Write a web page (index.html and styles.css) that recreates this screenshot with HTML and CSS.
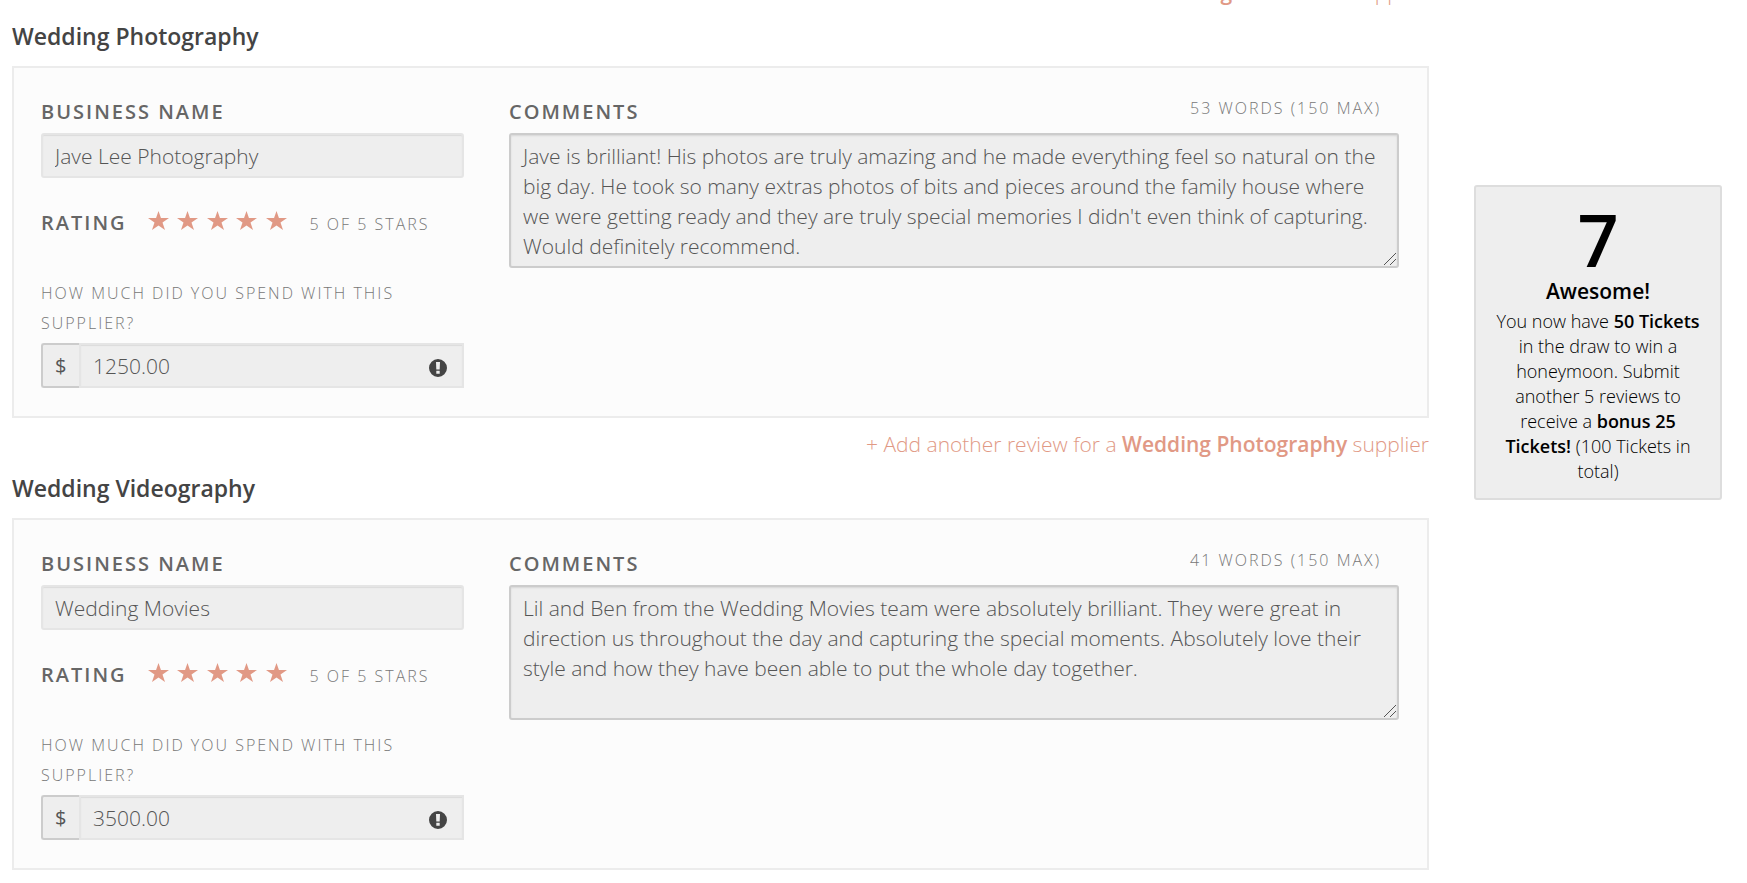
FILE: index.html
```html
<!DOCTYPE html>
<html lang="en">
<head>
  <title>Supplier Reviews</title>
  <meta charset="UTF-8">
  <meta name="viewport" content="width=device-width, initial-scale=1">
  <link rel="stylesheet" href="styles.css">
</head>
<body>
  <svg width="0" height="0" class="sprite" aria-hidden="true">
    <symbol id="star" viewBox="0 0 21 19">
      <path d="M10.500 0L12.950 7H21L14.500 11.600L17 19L10.500 14.500L4 19L6.500 11.600L0 7H8.050Z"/>
    </symbol>
    <symbol id="alert" viewBox="0 0 18 18">
      <path fill-rule="evenodd" d="M9 0a9 9 0 1 1 0 18A9 9 0 0 1 9 0zM7 3l.3 7.500h3.400L11 3zM7.300 11.800v2.900h3.400v-2.900z"/>
    </symbol>
  </svg>

  <div class="page">
    <main class="reviews">
      <div class="add-row">
        <a href="#celebrants" class="add-link">+ Add another review for a <strong>Wedding Celebrants</strong> supplier</a>
      </div>

      <h2>Wedding Photography</h2>
      <section class="card">
        <div class="details">
          <label class="label" for="photo-name">Business Name</label>
          <input type="text" id="photo-name" class="field" value="Jave Lee Photography">

          <div class="rating">
            <span class="label">Rating</span>
            <div class="stars">
              <button type="button" aria-label="1 star"><svg><use href="#star"/></svg></button>
              <button type="button" aria-label="2 stars"><svg><use href="#star"/></svg></button>
              <button type="button" aria-label="3 stars"><svg><use href="#star"/></svg></button>
              <button type="button" aria-label="4 stars"><svg><use href="#star"/></svg></button>
              <button type="button" aria-label="5 stars"><svg><use href="#star"/></svg></button>
            </div>
            <span class="small">5 of 5 stars</span>
          </div>

          <label class="small spend-label" for="photo-spend">How much did you spend with this supplier?</label>
          <div class="spend">
            <span class="addon">$</span>
            <input type="text" id="photo-spend" class="field" value="1250.00">
            <svg class="alert"><use href="#alert"/></svg>
          </div>
        </div>

        <div class="comments">
          <div class="comments-head">
            <label class="label" for="photo-comments">Comments</label>
            <span class="small">53 words (150 max)</span>
          </div>
          <textarea id="photo-comments" rows="4" spellcheck="false">Jave is brilliant! His photos are truly amazing and he made everything feel so natural on the big day. He took so many extras photos of bits and pieces around the family house where we were getting ready and they are truly special memories I didn't even think of capturing. Would definitely recommend.</textarea>
        </div>
      </section>
      <div class="add-row">
        <a href="#photography" class="add-link">+ Add another review for a <strong>Wedding Photography</strong> supplier</a>
      </div>

      <h2>Wedding Videography</h2>
      <section class="card">
        <div class="details">
          <label class="label" for="video-name">Business Name</label>
          <input type="text" id="video-name" class="field" value="Wedding Movies">

          <div class="rating">
            <span class="label">Rating</span>
            <div class="stars">
              <button type="button" aria-label="1 star"><svg><use href="#star"/></svg></button>
              <button type="button" aria-label="2 stars"><svg><use href="#star"/></svg></button>
              <button type="button" aria-label="3 stars"><svg><use href="#star"/></svg></button>
              <button type="button" aria-label="4 stars"><svg><use href="#star"/></svg></button>
              <button type="button" aria-label="5 stars"><svg><use href="#star"/></svg></button>
            </div>
            <span class="small">5 of 5 stars</span>
          </div>

          <label class="small spend-label" for="video-spend">How much did you spend with this supplier?</label>
          <div class="spend">
            <span class="addon">$</span>
            <input type="text" id="video-spend" class="field" value="3500.00">
            <svg class="alert"><use href="#alert"/></svg>
          </div>
        </div>

        <div class="comments">
          <div class="comments-head">
            <label class="label" for="video-comments">Comments</label>
            <span class="small">41 words (150 max)</span>
          </div>
          <textarea id="video-comments" rows="4" spellcheck="false">Lil and Ben from the Wedding Movies team were absolutely brilliant. They were great in direction us throughout the day and capturing the special moments. Absolutely love their style and how they have been able to put the whole day together.</textarea>
        </div>
      </section>
    </main>

    <aside class="tickets">
      <div class="count">7</div>
      <h3>Awesome!</h3>
      <p>You now have <strong>50 Tickets</strong> in the draw to win a honeymoon. Submit another 5 reviews to receive a <strong>bonus 25 Tickets!</strong> (100 Tickets in total)</p>
    </aside>
  </div>
</body>
</html>
```
FILE: styles.css
```css
* {
  box-sizing: border-box;
}
body {
  margin: 0;
  font-family: "Open Sans", sans-serif;
  font-size: 21px;
  font-weight: 300;
  line-height: 30px;
  color: #444;
  background: #fff;
}
.sprite {
  position: absolute;
}
.page {
  display: flex;
  align-items: flex-start;
  gap: 45px;
  padding: 0 25px 0 12px;
}
/* the list is scrolled part way past its first link */
.reviews {
  flex: 1;
  min-width: 0;
  margin-top: -23px;
}
h2 {
  margin: 14px 0 15px;
  font-size: 23px;
  font-weight: 600;
  line-height: 30px;
}
strong {
  font-weight: 600;
}
.add-row {
  text-align: right;
}
.card + .add-row {
  margin-top: 11px;
}
.add-link {
  color: #e19985;
  text-decoration: none;
}
.card {
  display: grid;
  grid-template-columns: minmax(0, 423fr) minmax(0, 890fr);
  gap: 45px;
  padding: 28px 28px 28px 27px;
  background: #fcfcfc;
  border: 2px solid #ececec;
}
.label {
  display: block;
  font-size: 20px;
  font-weight: 600;
  line-height: 32px;
  letter-spacing: 2px;
  text-transform: uppercase;
  color: #666;
}
.small {
  font-size: 16px;
  letter-spacing: 2px;
  text-transform: uppercase;
  color: #777;
}
.field {
  display: block;
  width: 100%;
  height: 45px;
  margin: 0;
  padding: 0 12px;
  font: inherit;
  color: #555;
  background: #eee;
  border: 2px solid #e5e5e5;
  border-radius: 3px;
  box-shadow: inset 0 1px 1px rgba(0, 0, 0, 0.08);
}
.label + .field {
  margin-top: 5px;
}
.rating {
  display: flex;
  align-items: baseline;
  margin: 29px 0 39px;
}
.stars {
  display: flex;
  justify-content: space-between;
  width: 139px;
  margin: 0 23px 0 21px;
}
.stars button {
  padding: 0;
  border: 0;
  background: none;
  cursor: pointer;
}
.stars svg {
  display: block;
  width: 21px;
  height: 19px;
  fill: #e19985;
}
.spend-label {
  display: block;
  margin-bottom: 5px;
}
.spend {
  position: relative;
  display: flex;
}
.addon {
  width: 38px;
  flex: none;
  padding-left: 12px;
  font-size: 20px;
  font-weight: 400;
  line-height: 41px;
  color: #555;
  background: #eee;
  border: 2px solid #ccc;
  border-right: 0;
  border-radius: 3px 0 0 3px;
}
.spend .field {
  border-radius: 0;
}
.alert {
  position: absolute;
  top: 16px;
  right: 17px;
  width: 18px;
  height: 18px;
  fill: #444;
}
.comments-head {
  display: flex;
  justify-content: space-between;
  margin-bottom: 5px;
}
.comments-head .small {
  padding-right: 18px;
  line-height: 24px;
}
textarea {
  display: block;
  width: 100%;
  height: 135px;
  margin: 0;
  padding: 6px 12px 5px;
  font: inherit;
  color: #555;
  background: #eee;
  border: 2px solid #ccc;
  border-radius: 3px;
  box-shadow: inset 0 1px 2px rgba(0, 0, 0, 0.1);
  overflow: auto;
  resize: vertical;
}
textarea::-webkit-resizer {
  background: url("data:image/svg+xml,%3Csvg xmlns='http://www.w3.org/2000/svg' width='15' height='15'%3E%3Cpath d='M2 14L14 2M8 14L14 8' stroke='%23555'/%3E%3C/svg%3E") no-repeat right bottom;
}
.tickets {
  width: 248px;
  flex: none;
  margin-top: 185px;
  padding: 15px 18px 14px;
  text-align: center;
  color: #000;
  background: #eee;
  border: 2px solid #ddd;
  border-radius: 3px;
}
.count {
  font-size: 72px;
  font-weight: 600;
  line-height: 74px;
}
.tickets h3 {
  margin: 0 0 3px;
  font-size: 21px;
  font-weight: 600;
  line-height: 30px;
}
.tickets p {
  margin: 0;
  font-size: 18px;
  line-height: 25px;
}
```
